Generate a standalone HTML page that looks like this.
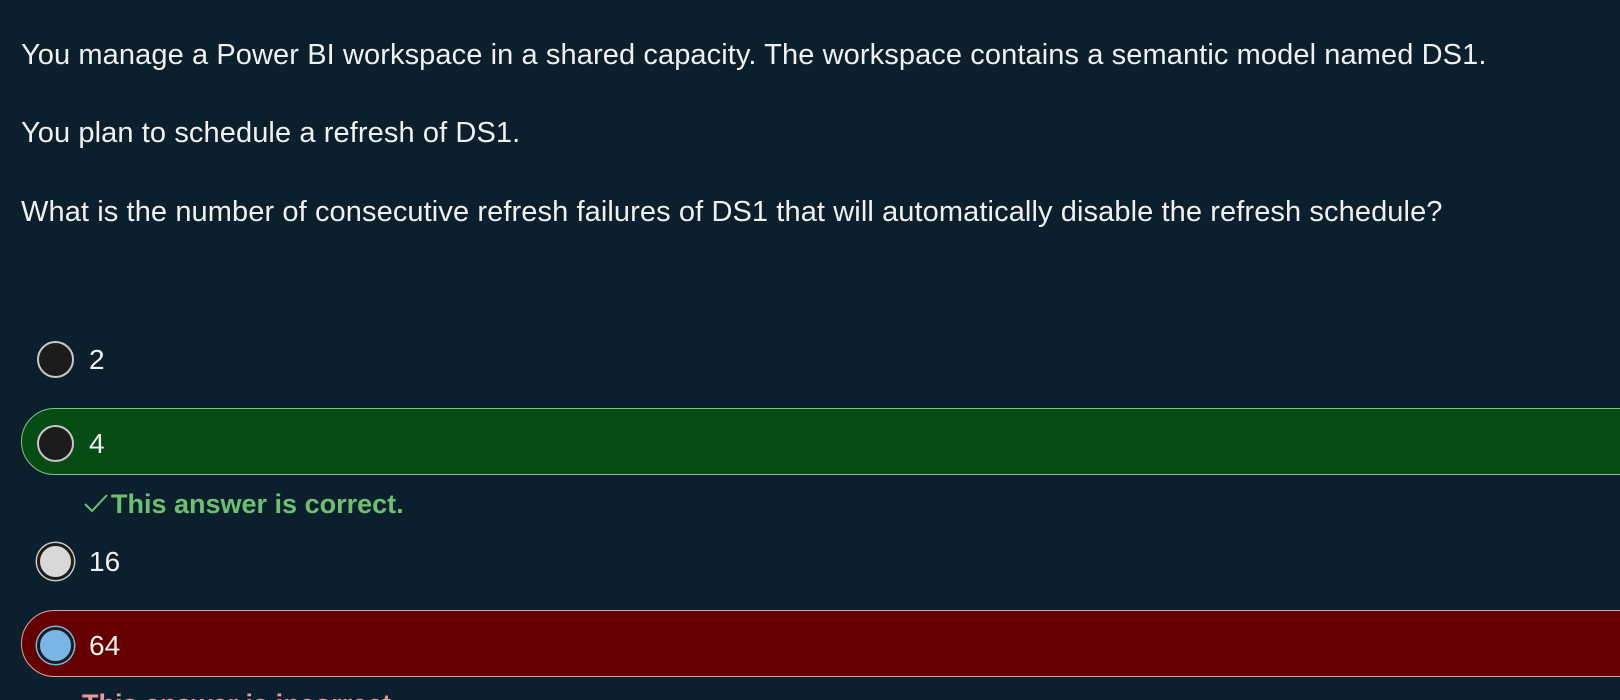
<!DOCTYPE html>
<html><head><meta charset="utf-8"><style>
html,body{margin:0;padding:0;background:#0b1f2d;width:1620px;height:700px;overflow:hidden;font-family:"Liberation Sans",sans-serif;color:#f0f0f0}
#w{position:relative;width:1620px;height:700px;overflow:hidden}
.q{position:absolute;left:21px;font-size:29px;letter-spacing:0.1px;white-space:nowrap;line-height:1}
.box{position:absolute;left:21px;width:1640px;height:67px;border-radius:34px;box-sizing:border-box}
.radio{position:absolute;width:37px;height:37px;border-radius:50%;box-sizing:border-box;border:2px solid #c8c8c8;background:#1c1c1c}
.lbl{position:absolute;font-size:28px;line-height:1;white-space:nowrap}
</style></head><body><div id="w">
<div class="q" style="top:41px">You manage a Power BI workspace in a shared capacity. The workspace contains a semantic model named DS1.</div>
<div class="q" style="top:119px">You plan to schedule a refresh of DS1.</div>
<div class="q" style="top:198px">What is the number of consecutive refresh failures of DS1 that will automatically disable the refresh schedule?</div>

<div class="radio" style="left:37px;top:341px"></div>
<div class="lbl" style="left:89px;top:346px">2</div>

<div class="box" style="top:408px;background:#074b15;border:1px solid #7fc47f"></div>
<div class="radio" style="left:37px;top:425px"></div>
<div class="lbl" style="left:89px;top:430px">4</div>

<svg style="position:absolute;left:83px;top:492px" width="26" height="22" viewBox="0 0 26 22"><path d="M2 12 L9 19 L24 3" fill="none" stroke="#6fbf73" stroke-width="2"/></svg>
<div class="lbl" style="left:111px;top:491px;font-weight:bold;color:#6fbf73;font-size:27px">This answer is correct.</div>

<div class="radio" style="left:37px;top:543px;background:#d8d8d8;border:3px solid #1c1c1c;box-shadow:0 0 0 1.5px #c8c8c8"></div>
<div class="lbl" style="left:89px;top:548px">16</div>

<div class="box" style="top:610px;background:#640000;border:1px solid #e0a0a0"></div>
<div class="radio" style="left:37px;top:627px;background:#78b6e8;border:3px solid #1c1c1c;box-shadow:0 0 0 1.5px #78b6e8"></div>
<div class="lbl" style="left:89px;top:632px">64</div>

<div class="lbl" style="left:82px;top:691px;font-weight:bold;color:#e89a9a;font-size:27px">This answer is incorrect.</div>
</div></body></html>
